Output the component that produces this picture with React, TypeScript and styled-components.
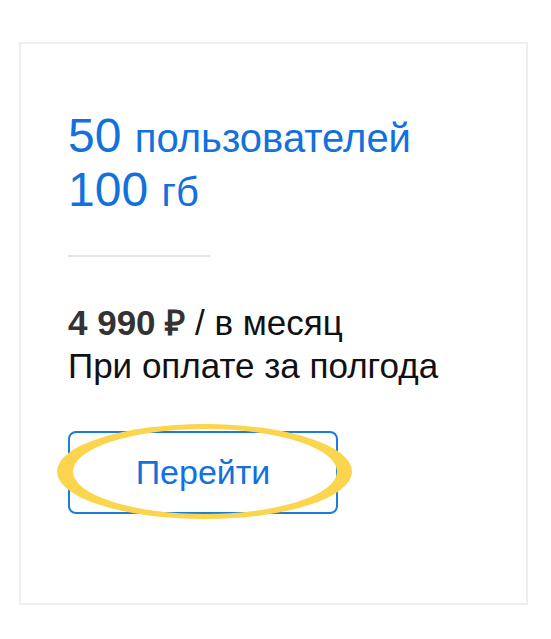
import React, { FC } from 'react'
import styled, { createGlobalStyle } from 'styled-components'

const GlobalStyle = createGlobalStyle`
    html, body {
        margin: 0;
        padding: 0;
        background: #ffffff;
    }
    body {
        font-family: "Liberation Sans", Arial, sans-serif;
    }
`

const Page = styled.div`
    padding: 42px 0 0 19px;
`

const CardStyle = styled.div`
    width: 509px;
    box-sizing: border-box;
    border: 2px solid #eeeeee;
    padding: 65px 0 89px 47px;
`

const Title = styled.div`
    color: #1271dc;
    font-size: 48px;
    line-height: 54px;
`

const Unit = styled.span`
    font-size: 40px;
    line-height: 1;
`

const Divider = styled.div`
    width: 142px;
    height: 2px;
    background: #e3e3e3;
    margin: 38px 0 44px;
`

const PriceLine = styled.div`
    font-size: 35px;
    line-height: 43px;
    color: #111111;
`

const Price = styled.b`
    color: #333333;
`

const ButtonWrap = styled.div`
    position: relative;
    width: 270px;
    margin-top: 44px;
`

const Button = styled.button`
    display: flex;
    align-items: center;
    justify-content: center;
    width: 270px;
    height: 83px;
    box-sizing: border-box;
    border: 2px solid #1a7ddc;
    border-radius: 8px;
    background: #ffffff;
    color: #1271dc;
    font-family: "Liberation Sans", Arial, sans-serif;
    font-size: 34px;
    cursor: pointer;
`

const Highlight = styled.svg`
    position: absolute;
    left: -12px;
    top: -8px;
    width: 300px;
    height: 98px;
    pointer-events: none;
`

const Marker: FC = () => (
    <Highlight viewBox="0 0 300 98">
        <path
            fill="#fbd54e"
            fillRule="evenodd"
            d="M 1 48.5 A 147.5 47.5 0 1 0 296 48.5 A 147.5 47.5 0 1 0 1 48.5 Z
               M 17 48.5 A 132 42.5 0 1 0 281 48.5 A 132 42.5 0 1 0 17 48.5 Z"
        />
    </Highlight>
)

const App: FC = () => (
    <>
        <GlobalStyle />
        <Page>
            <CardStyle>
                <Title>
                    <div>50 <Unit>пользователей</Unit></div>
                    <div>100 <Unit>гб</Unit></div>
                </Title>
                <Divider />
                <PriceLine><Price>4 990 ₽</Price> / в месяц</PriceLine>
                <PriceLine>При оплате за полгода</PriceLine>
                <ButtonWrap>
                    <Button>Перейти</Button>
                    <Marker />
                </ButtonWrap>
            </CardStyle>
        </Page>
    </>
)

export default App
